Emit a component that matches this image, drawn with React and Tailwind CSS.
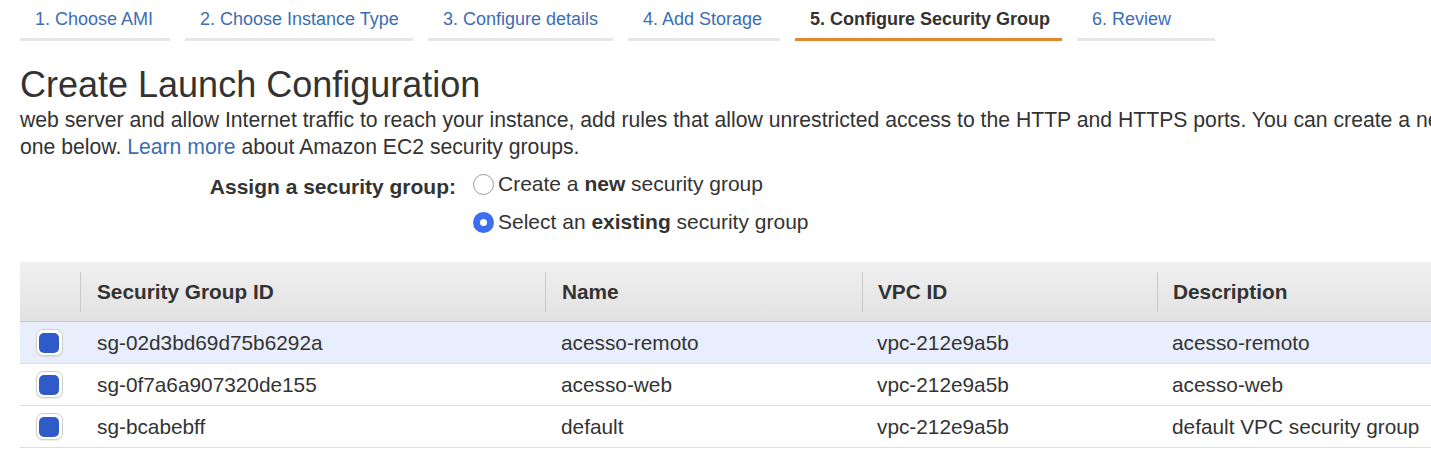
import React from 'react';

const tabs = [
  { label: '1. Choose AMI', w: 'w-[150px]' },
  { label: '2. Choose Instance Type', w: 'w-[228px]' },
  { label: '3. Configure details', w: 'w-[185px]' },
  { label: '4. Add Storage', w: 'w-[152px]' },
  { label: '5. Configure Security Group', w: 'w-[267px]', active: true },
  { label: '6. Review', w: 'w-[138px]' },
];

const groups = [
  { id: 'sg-02d3bd69d75b6292a', name: 'acesso-remoto', vpc: 'vpc-212e9a5b', desc: 'acesso-remoto', selected: true },
  { id: 'sg-0f7a6a907320de155', name: 'acesso-web', vpc: 'vpc-212e9a5b', desc: 'acesso-web' },
  { id: 'sg-bcabebff', name: 'default', vpc: 'vpc-212e9a5b', desc: 'default VPC security group' },
];

function Checkbox() {
  return (
    <span className="flex h-[27px] w-[27px] items-center justify-center rounded-[7px] border border-[#cfcfcf] bg-white shadow-[0_1px_1px_rgba(0,0,0,0.08)]">
      <span className="h-[20px] w-[20px] rounded-[5px] bg-[#2f5bc9]"></span>
    </span>
  );
}

function Radio({ checked }) {
  return checked ? (
    <span className="flex h-[21px] w-[21px] shrink-0 items-center justify-center rounded-full bg-[#3d6ef0]">
      <span className="h-[7px] w-[7px] rounded-full bg-white"></span>
    </span>
  ) : (
    <span className="h-[21px] w-[21px] shrink-0 rounded-full border border-[#9a9a9a] bg-white"></span>
  );
}

export default function App() {
  return (
    <div className="h-[449px] w-[1431px] overflow-hidden bg-white font-['Liberation_Sans',Arial,sans-serif] text-[#333]">
      {/* Wizard steps */}
      <div className="flex gap-[15px] px-[20px]">
        {tabs.map((t) => (
          <div
            key={t.label}
            className={`${t.w} h-[41px] pl-[15px] pt-[8px] text-[18px] leading-[22px] ${
              t.active
                ? 'border-b-[3px] border-[#e0892f] font-bold text-[#333]'
                : 'border-b-[3px] border-[#e6e6e6] text-[#3c6db3]'
            }`}
          >
            {t.label}
          </div>
        ))}
      </div>

      <div className="px-[20px]">
        <h1 className="mt-[24px] text-[36px] leading-[40px] text-[#333]">Create Launch Configuration</h1>
        <p className="mt-[1px] whitespace-nowrap text-[21.2px] leading-[27px] text-[#333]">
          web server and allow Internet traffic to reach your instance, add rules that allow unrestricted access to the HTTP and HTTPS ports. You can create a ne
          <br />
          one below. <span className="text-[#3c6db3]">Learn more</span> about Amazon EC2 security groups.
        </p>

        {/* Assign security group */}
        <div className="mt-[12px] flex">
          <div className="w-[453px] pr-[17px] pt-[3px] text-right text-[21px] font-bold leading-[24px]">Assign a security group:</div>
          <div className="flex flex-col gap-[14px]">
            <label className="flex h-[24px] items-center gap-[4px] text-[21px]">
              <Radio />
              <span>
                Create a <b>new</b> security group
              </span>
            </label>
            <label className="flex h-[24px] items-center gap-[4px] text-[21px]">
              <Radio checked />
              <span>
                Select an <b>existing</b> security group
              </span>
            </label>
          </div>
        </div>
      </div>

      {/* Security group table */}
      <div className="ml-[20px] mt-[28px] w-[1430px]">
        <div className="flex h-[60px] items-center border-b border-[#c8c8c8] bg-gradient-to-b from-[#f0f0f0] to-[#e2e2e2] text-[20.8px] font-bold">
          <div className="w-[60px]"></div>
          <div className="flex h-[40px] w-[465px] items-center border-l border-[#c9c9c9] pl-[16px]">Security Group ID</div>
          <div className="flex h-[40px] w-[317px] items-center border-l border-[#c9c9c9] pl-[16px]">Name</div>
          <div className="flex h-[40px] w-[295px] items-center border-l border-[#c9c9c9] pl-[15px]">VPC ID</div>
          <div className="flex h-[40px] flex-1 items-center border-l border-[#c9c9c9] pl-[15px]">Description</div>
        </div>
        {groups.map((g) => (
          <div
            key={g.id}
            className={`flex h-[42px] items-center border-b border-[#dedede] text-[20.8px] ${g.selected ? 'bg-[#e8eefb]' : 'bg-white'}`}
          >
            <div className="flex w-[60px] justify-center pr-[2px]">
              <Checkbox />
            </div>
            <div className="w-[465px] pl-[17px]">{g.id}</div>
            <div className="w-[317px] pl-[16px]">{g.name}</div>
            <div className="w-[295px] pl-[15px]">{g.vpc}</div>
            <div className="flex-1 pl-[15px]">{g.desc}</div>
          </div>
        ))}
      </div>
    </div>
  );
}
